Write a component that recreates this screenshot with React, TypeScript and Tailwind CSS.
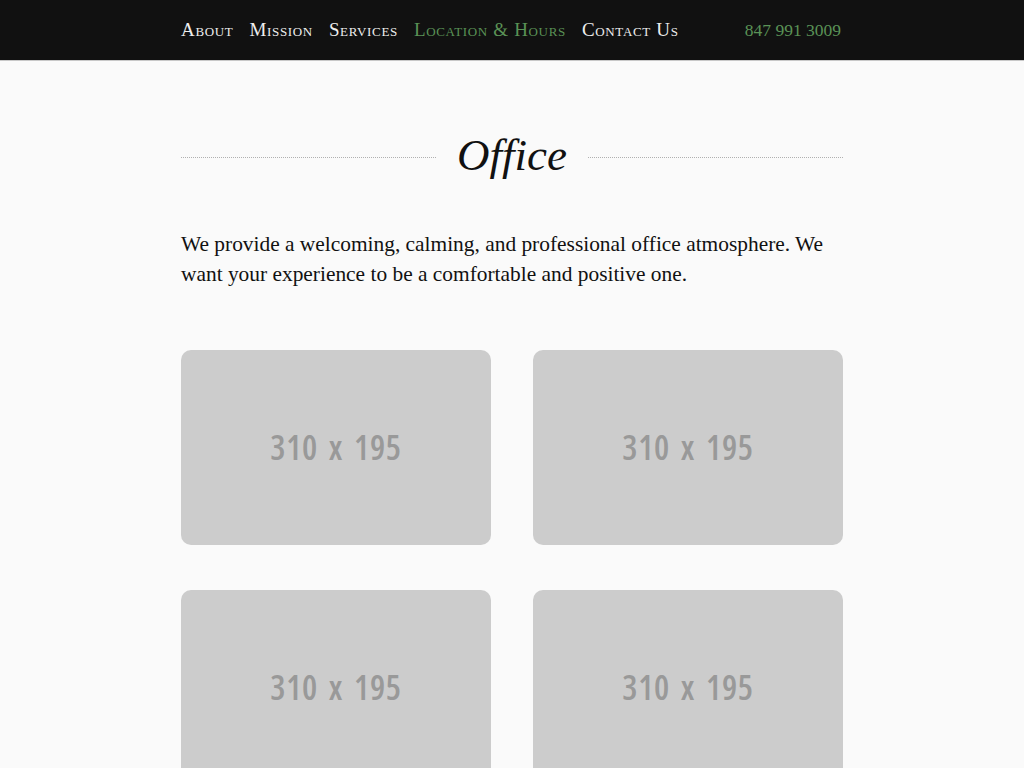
const navItems = [
  { label: "About", active: false },
  { label: "Mission", active: false },
  { label: "Services", active: false },
  { label: "Location & Hours", active: true },
  { label: "Contact Us", active: false },
];

function Placeholder() {
  return (
    <div className="flex h-[195px] w-[310px] items-center justify-center rounded-[10px] bg-[#cccccc]">
      <span className="font-['Open_Sans',sans-serif] text-[34px] font-semibold tracking-[0.02em] text-[#999999] [font-stretch:75%] [word-spacing:4px]">
        310 x 195
      </span>
    </div>
  );
}

export default function App() {
  return (
    <div className="min-h-[768px] bg-[#fafafa] font-['Liberation_Serif',serif]">
      {/* Nav */}
      <div className="h-[61px] border-b border-[#c8c8c8] bg-[#111111]">
        <div className="mx-auto flex h-[60px] w-[662px] items-center justify-between">
          <ul className="flex gap-4 text-[19px] tracking-[0.035em] [font-variant:small-caps]">
            {navItems.map((item) => (
              <li
                key={item.label}
                className={item.active ? "text-[#5a9256]" : "text-[#eeeeee]"}
              >
                {item.label}
              </li>
            ))}
          </ul>
          <span className="pr-[2px] text-[17.5px] text-[#5a9256]">847 991 3009</span>
        </div>
      </div>

      {/* Main */}
      <div className="mx-auto w-[662px] pt-[62px]">
        {/* Title */}
        <div className="flex items-center gap-[21px]">
          <div className="mt-[4px] h-0 flex-1 border-t border-dotted border-[#b0b0b0]" />
          <h1 className="text-[45px] italic leading-[64px] text-[#111111]">Office</h1>
          <div className="mt-[4px] h-0 flex-1 border-t border-dotted border-[#b0b0b0]" />
        </div>

        <p className="mt-[42px] text-[21.4px] leading-[30px] text-[#111111]">
          We provide a welcoming, calming, and professional office atmosphere. We
          want your experience to be a comfortable and positive one.
        </p>

        {/* Photos */}
        <div className="mt-[61px] grid grid-cols-[310px_310px] justify-between gap-y-[45px]">
          <Placeholder />
          <Placeholder />
          <Placeholder />
          <Placeholder />
        </div>
      </div>
    </div>
  );
}
